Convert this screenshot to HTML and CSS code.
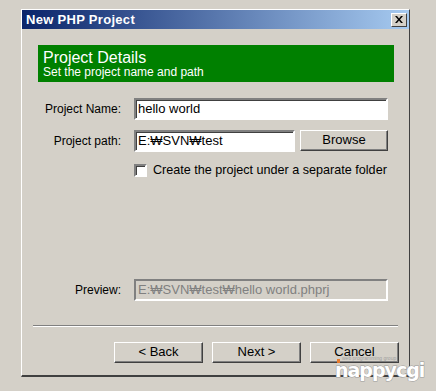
FILE: index.html
```html
<!DOCTYPE html>
<html lang="en">
<head>
    <meta charset="UTF-8">
    <title>New PHP Project</title>
    <link rel="stylesheet" href="styles.css">
</head>
<body>

    <div class="window">
        <div class="titlebar">
            <span class="title">New PHP Project</span>
            <span class="close">
                <svg width="8" height="7" viewBox="0 0 8 7"><path d="M0 0h2l2 2.5 2-2.5h2l-3 3.5 3 3.5h-2l-2-2.5-2 2.5h-2l3-3.5z" fill="#000"/></svg>
            </span>
        </div>

        <div class="content">
            <div class="banner">
                <div class="banner-title">Project Details</div>
                <div class="banner-sub">Set the project name and path</div>
            </div>

            <div class="form">
                <label class="label">Project Name:</label>
                <div class="field">hello world</div>

                <label class="label">Project path:</label>
                <div class="path-row">
                    <div class="field short">E:₩SVN₩test</div>
                    <div class="button browse">Browse</div>
                </div>

                <span></span>
                <div class="check-row">
                    <span class="checkbox"></span>
                    <span>Create the project under a separate folder</span>
                </div>
            </div>

            <div class="form preview">
                <label class="label">Preview:</label>
                <div class="field disabled">E:₩SVN₩test₩hello world.phprj</div>
            </div>

            <div class="separator"></div>

            <div class="buttons">
                <div class="button">&lt; Back</div>
                <div class="button">Next &gt;</div>
                <div class="button">Cancel</div>
            </div>
        </div>
    </div>

    <!-- watermark -->
    <div class="watermark">
        <span class="wm-dot"></span>
        <span class="wm-small">web programming group</span>
        <span class="wm-name">nappycgi</span>
    </div>

</body>
</html>
```

FILE: styles.css
```css
body {
    margin: 0;
    background: #d4d0c8;
    font-family: "Liberation Sans", Arial, sans-serif;
    font-size: 12px;
    color: #000;
    width: 436px;
    height: 391px;
    overflow: hidden;
    position: relative;
}

.window {
    margin: 9px 0 0 21px;
    width: 387px;
    height: 365px;
    border-left: 1px solid #fff;
    border-top: 1px solid #fff;
    border-right: 1px solid #404040;
    border-bottom: 2px solid #404040;
    display: flex;
    flex-direction: column;
}

.titlebar {
    height: 19px;
    background: linear-gradient(to right, #0a246a, #a6caf0);
    display: flex;
    align-items: center;
    justify-content: space-between;
    padding: 0 2px 0 4px;
}

.title {
    color: #fff;
    font-weight: bold;
    font-size: 13px;
    letter-spacing: 0.3px;
}

.close {
    width: 14px;
    height: 12px;
    background: #d4d0c8;
    border: 1px solid;
    border-color: #fff #404040 #404040 #fff;
    display: flex;
    align-items: center;
    justify-content: center;
}

.content {
    padding: 16px 15px 0 16px;
    flex: 1;
    display: flex;
    flex-direction: column;
}

.banner {
    background: #008000;
    color: #fff;
    height: 37px;
    padding: 0 5px;
    display: flex;
    flex-direction: column;
    justify-content: center;
}

.banner-title {
    font-size: 16px;
    line-height: 17px;
    margin-top: 1px;
}

.banner-sub {
    font-size: 12px;
    line-height: 13px;
}

.form {
    display: grid;
    grid-template-columns: 83px 254px;
    column-gap: 13px;
    row-gap: 10px;
    margin-top: 16px;
    align-items: center;
}

.label {
    text-align: right;
}

.field {
    height: 18px;
    line-height: 18px;
    background: #fff;
    border: 2px solid;
    border-color: #808080 #fff #fff #808080;
    box-shadow: inset 1px 1px 0 #404040;
    padding-left: 2px;
    white-space: nowrap;
    font-size: 13px;
}

.field.short {
    width: 157px;
}

.field.disabled {
    background: #d4d0c8;
    color: #808080;
    box-shadow: none;
}

.path-row {
    display: flex;
    gap: 5px;
}

.button {
    width: 87px;
    height: 17px;
    line-height: 17px;
    text-align: center;
    background: #d4d0c8;
    border: 1px solid;
    border-color: #fff #404040 #404040 #fff;
    box-shadow: inset -1px -1px 0 #808080;
    padding-bottom: 2px;
    font-size: 13px;
}

.check-row {
    display: flex;
    align-items: center;
    gap: 6px;
    font-size: 12.6px;
    white-space: nowrap;
    margin-top: 1px;
}

.checkbox {
    flex-shrink: 0;
    width: 9px;
    height: 9px;
    background: #fff;
    border: 2px solid;
    border-color: #808080 #fff #fff #808080;
    box-shadow: inset 1px 1px 0 #404040;
}

.preview {
    margin-top: auto;
}

.separator {
    margin: 24px -4px 0 -5px;
    border-top: 1px solid #808080;
    border-bottom: 1px solid #fff;
}

.buttons {
    display: flex;
    justify-content: flex-end;
    gap: 9px;
    margin: 15px -5px 12px 0;
}

.watermark {
    position: absolute;
    left: 334px;
    top: 356px;
    width: 100px;
    height: 30px;
}

.wm-dot {
    position: absolute;
    left: 3px;
    top: 3px;
    width: 3px;
    height: 4px;
    background: #e87a2c;
}

.wm-small {
    position: absolute;
    left: 8px;
    top: -1px;
    font-size: 5px;
    line-height: 6px;
    color: #a0a0a0;
    white-space: nowrap;
}

.wm-name {
    position: absolute;
    left: 1px;
    top: 3px;
    font-family: "DejaVu Sans", sans-serif;
    font-weight: bold;
    font-size: 19px;
    line-height: 22px;
    letter-spacing: -1px;
    color: #fff;
    -webkit-text-stroke: 1px #9a9a9a;
    paint-order: stroke fill;
}
```
